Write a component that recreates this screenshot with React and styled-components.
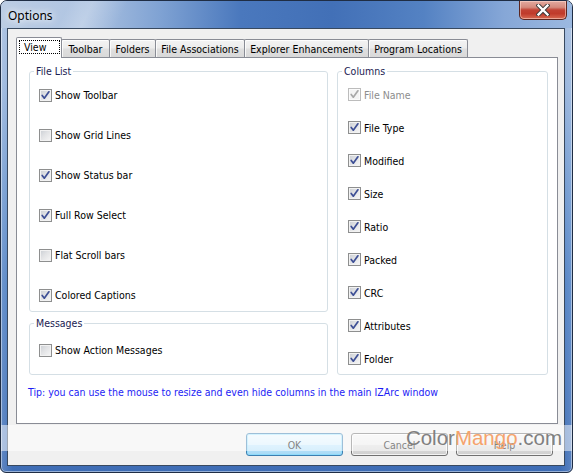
import React from 'react';
import styled, { createGlobalStyle } from 'styled-components';

const UI = `"DejaVu Sans Condensed", "Liberation Sans", sans-serif`;

const GlobalStyle = createGlobalStyle`
  html, body { margin: 0; padding: 0; background: #ffffff; }
  body { width: 573px; height: 473px; overflow: hidden; }
  * { box-sizing: border-box; }
`;

const Window = styled.div`
  position: relative;
  width: 573px;
  height: 473px;
  border: 1px solid #1f2d44;
  border-radius: 7px 7px 6px 6px;
  overflow: hidden;
  display: flex;
  flex-direction: column;
  background:
    linear-gradient(90deg, rgba(255,255,255,0.18) 0%, rgba(255,255,255,0) 2%, rgba(255,255,255,0) 98%, rgba(255,255,255,0.15) 100%),
    linear-gradient(180deg, #a6bedf 0%, #94b2db 18%, #6d97cf 40%, #4f80c3 60%, #3e6db5 100%);
  box-shadow: inset 0 0 0 1px rgba(255,255,255,0.45);
  font-family: ${UI};
  font-size: 10.5px;
  color: #000;
`;

const TitleBar = styled.div`
  height: 28px;
  flex: none;
  display: flex;
  align-items: flex-start;
  justify-content: space-between;
  padding-left: 7px;
  margin: -1px -1px 0 -1px;
  padding-top: 1px;
  background:
    linear-gradient(115deg, rgba(255,255,255,0) 0%, rgba(255,255,255,0) 12%, rgba(255,255,255,0.22) 16%, rgba(255,255,255,0) 22%, rgba(255,255,255,0) 100%),
    linear-gradient(90deg, #bccde4 0%, #b0c5e2 14%, #7fa2d3 28%, #4a78bd 42%, #4270b7 58%, #5482c3 74%, #86a7d7 88%, #9cb9e0 100%);
`;

const Title = styled.div`
  margin-top: 7px;
  margin-left: 1px;
  font-family: "Noto Sans", "Liberation Sans", sans-serif;
  font-size: 12px;
  line-height: 15px;
  color: #000;
  text-shadow: 0 0 6px #ffffff, 0 0 10px rgba(255,255,255,0.9);
`;

const CloseButton = styled.div`
  width: 48px;
  height: 19px;
  margin-right: 6px;
  border: 1px solid #5b2620;
  border-top: none;
  border-radius: 0 0 5px 5px;
  display: flex;
  align-items: center;
  justify-content: center;
  background: linear-gradient(180deg, #e3aaa0 0%, #d58a7d 35%, #c24233 50%, #c03b2b 70%, #d86a52 100%);
  box-shadow: inset 0 0 0 1px rgba(255,220,210,0.55);
`;

const Client = styled.div`
  flex: 1;
  margin: 0 7px 6px 6px;
  border: 1px solid #38495f;
  background: #f0f0f0;
  display: flex;
  flex-direction: column;
  padding: 8px 0 0 8px;
`;

const TabStrip = styled.div`
  display: flex;
  align-items: flex-end;
  height: 21px;
  margin-bottom: -1px;
  position: relative;
  z-index: 1;
`;

const Tab = styled.div`
  width: ${p => p.$w}px;
  margin-right: -1px;
  border: 1px solid #898c95;
  border-bottom: none;
  border-radius: 2px 2px 0 0;
  display: flex;
  ${p => p.$selected ? `
    height: 21px;
    background: #ffffff;
    padding: 2px 1px 4px 2px;
    position: relative;
    z-index: 2;
  ` : `
    height: 18px;
    margin-bottom: 1px;
    align-items: center;
    justify-content: center;
    padding-top: 1px;
    background: linear-gradient(180deg, #f3f3f3 0%, #ececec 48%, #dfdfdf 52%, #d9d9d9 100%);
    box-shadow: inset 1px 1px 0 rgba(255,255,255,0.8);
  `}
`;

const FocusLabel = styled.span`
  flex: 1;
  border: 1px dotted #000;
  padding-left: 4px;
  display: flex;
  align-items: center;
  line-height: 13px;
`;

const Panel = styled.div`
  width: 542px;
  height: 367px;
  border: 1px solid #898c95;
  background: #ffffff;
  padding: 13px 9px 0 12px;
  display: grid;
  grid-template-columns: 299px 211px;
  column-gap: 9px;
  align-content: start;
`;

const Column = styled.div`
  display: flex;
  flex-direction: column;
  gap: 11px;
`;

const Group = styled.div`
  position: relative;
  height: ${p => p.$h}px;
  border: 1px solid #d5dfe5;
  border-radius: 3px;
  padding: ${p => p.$pt}px 0 0 ${p => p.$pl}px;
  display: flex;
  flex-direction: column;
`;

const GroupLabel = styled.span`
  position: absolute;
  top: -8px;
  left: 4px;
  padding: 0 2px;
  background: #ffffff;
  line-height: 14px;
  color: #1a2151;
`;

const CheckRow = styled.div`
  height: ${p => p.$h}px;
  flex: none;
  display: flex;
  align-items: center;
  gap: 3px;
  color: ${p => p.$disabled ? '#8d8d8d' : '#000000'};
`;

const BoxFrame = styled.span`
  width: 13px;
  height: 13px;
  flex: none;
  border: 1px solid ${p => p.$disabled ? '#bcbcbc' : '#8e8f8f'};
  background: ${p => p.$disabled
    ? '#f4f4f4'
    : 'linear-gradient(135deg, #c9cdd3 0%, #e2e3e5 45%, #f7f7f7 100%)'};
  box-shadow: inset 0 0 0 1px ${p => p.$disabled ? '#fbfbfb' : '#f2f2f2'};
  display: flex;
`;

const Tip = styled.div`
  grid-column: 1 / -1;
  margin: 10px 0 0 -1px;
  line-height: 14px;
  color: #1d1df5;
`;

const ButtonRow = styled.div`
  display: flex;
  justify-content: flex-end;
  gap: 8px;
  margin-top: 9px;
  padding-right: 11px;
`;

const Button = styled.button`
  width: 97px;
  height: 23px;
  padding: 0;
  border: 1px solid ${p => p.$default ? '#3c7fb1' : '#707070'};
  border-radius: 3px;
  background: ${p => p.$default
    ? 'linear-gradient(180deg, #eaf6fd 0%, #d9f0fc 50%, #bee6fd 52%, #a7d9f5 100%)'
    : 'linear-gradient(180deg, #f2f2f2 0%, #ebebeb 50%, #dddddd 52%, #cfcfcf 100%)'};
  box-shadow: inset 0 0 0 1px ${p => p.$default ? 'rgba(120,220,255,0.55)' : 'rgba(255,255,255,0.75)'};
  font-family: ${UI};
  font-size: 10.5px;
  color: #000;
`;

const Watermark = styled.div`
  position: absolute;
  top: 424px;
  left: -1px;
  right: -1px;
  height: 26px;
  background: rgba(255,255,255,0.5);
  display: flex;
  justify-content: flex-end;
  padding-right: 11px;
  font-family: "Liberation Sans", sans-serif;
  font-size: 20.5px;
  line-height: 26px;
  color: #808080;
`;

const Mango = styled.span`
  color: #f5a36c;
`;

function CheckMark({ disabled }) {
  return (
    <svg width="11" height="11" viewBox="0 0 11 11">
      <polyline
        points="2.2,5.4 4.3,8.2 8.9,1.8"
        fill="none"
        stroke={disabled ? '#a8a8a8' : '#3d4f95'}
        strokeWidth="1.7"
        strokeLinecap="round"
        strokeLinejoin="round"
      />
    </svg>
  );
}

function Check({ label, checked, disabled, h }) {
  return (
    <CheckRow $h={h} $disabled={disabled}>
      <BoxFrame $disabled={disabled}>{checked && <CheckMark disabled={disabled} />}</BoxFrame>
      <span>{label}</span>
    </CheckRow>
  );
}

const tabs = [
  { label: 'View', w: 46, selected: true },
  { label: 'Toolbar', w: 49 },
  { label: 'Folders', w: 47 },
  { label: 'File Associations', w: 90 },
  { label: 'Explorer Enhancements', w: 125 },
  { label: 'Program Locations', w: 100 },
];

const fileList = [
  ['Show Toolbar', true],
  ['Show Grid Lines', false],
  ['Show Status bar', true],
  ['Full Row Select', true],
  ['Flat Scroll bars', false],
  ['Colored Captions', true],
];

const columns = ['File Type', 'Modified', 'Size', 'Ratio', 'Packed', 'CRC', 'Attributes', 'Folder'];

export default function App() {
  return (
    <>
      <GlobalStyle />
      <Window>
        <TitleBar>
          <Title>Options</Title>
          <CloseButton>
            <svg width="14" height="12" viewBox="0 0 14 12">
              <path d="M2.5 1.5 L11.5 10.5 M11.5 1.5 L2.5 10.5" stroke="#3a3a3a" strokeWidth="4.2" strokeLinecap="square" fill="none" />
              <path d="M2.5 1.5 L11.5 10.5 M11.5 1.5 L2.5 10.5" stroke="#ffffff" strokeWidth="2.4" strokeLinecap="square" fill="none" />
            </svg>
          </CloseButton>
        </TitleBar>
        <Client>
          <TabStrip>
            {tabs.map(t => (
              <Tab key={t.label} $w={t.w} $selected={t.selected}>
                {t.selected ? <FocusLabel>{t.label}</FocusLabel> : t.label}
              </Tab>
            ))}
          </TabStrip>
          <Panel>
            <Column>
              <Group $h={241} $pt={3} $pl={9}>
                <GroupLabel>File List</GroupLabel>
                {fileList.map(([l, c]) => (
                  <Check key={l} label={l} checked={c} h={40} />
                ))}
              </Group>
              <Group $h={52} $pt={6} $pl={9}>
                <GroupLabel>Messages</GroupLabel>
                <Check label="Show Action Messages" checked={false} h={40} />
              </Group>
            </Column>
            <Group $h={304} $pt={6} $pl={10}>
              <GroupLabel>Columns</GroupLabel>
              <Check label="File Name" checked disabled h={33} />
              {columns.map(l => (
                <Check key={l} label={l} checked h={33} />
              ))}
            </Group>
            <Tip>Tip: you can use the mouse to resize and even hide columns in the main IZArc window</Tip>
          </Panel>
          <ButtonRow>
            <Button $default>OK</Button>
            <Button>Cancel</Button>
            <Button>Help</Button>
          </ButtonRow>
        </Client>
        <Watermark>
          <span>Color</span><Mango>Mango</Mango><span>.com</span>
        </Watermark>
      </Window>
    </>
  );
}
